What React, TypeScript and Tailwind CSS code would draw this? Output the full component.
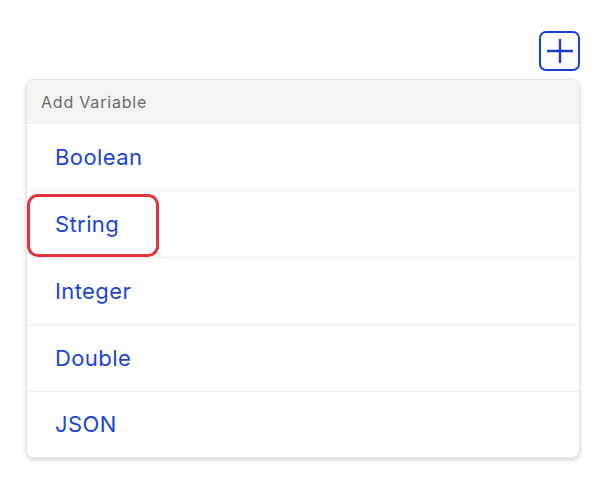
const items = ["Boolean", "String", "Integer", "Double", "JSON"];

export default function App() {
  return (
    <div className="w-[610px] h-[488px] bg-white font-['Inter',sans-serif] pt-[31px] pl-[26px]">
      <div className="w-[554px] flex justify-end">
        <button className="w-[41px] h-[40px] border-2 border-[#1a3fd0] rounded-[7px] flex items-center justify-center">
          <svg width="28" height="28" viewBox="0 0 28 28" fill="none" stroke="#1a3fd0" strokeWidth="2.4">
            <path d="M1 14h26M14 2v24" />
          </svg>
        </button>
      </div>
      <div className="mt-[8px] w-[554px] rounded-[8px] border border-[#e6e6e6] bg-white shadow-[0_2px_4px_rgba(0,0,0,0.18)] overflow-hidden">
        <div className="h-[44px] bg-[#f4f4f4] border-b border-[#ebebeb] flex items-center pl-[14px] text-[16px] tracking-[0.8px] text-[#6b6b6b]">
          Add Variable
        </div>
        {items.map((item, i) => (
          <div
            key={item}
            className={`relative flex items-center pl-[28px] text-[22px] tracking-[0.4px] text-[#1b44d8] ${i < items.length - 1 ? "h-[67px] border-b border-[#ececec]" : "h-[65px]"}`}
          >
            {item}
            {item === "String" && (
              <div className="absolute left-0 top-[3px] w-[132px] h-[63px] border-[3px] border-[#e3333b] rounded-[11px]" />
            )}
          </div>
        ))}
      </div>
    </div>
  );
}
